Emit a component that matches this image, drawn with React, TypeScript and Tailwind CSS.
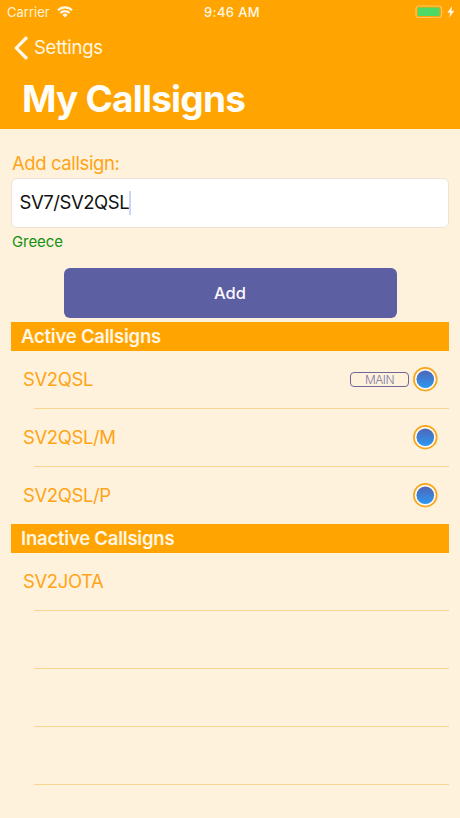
import { useState } from 'react'

interface Callsign {
  name: string
  main?: boolean
}

const ACTIVE: Callsign[] = [{ name: 'SV2QSL', main: true }, { name: 'SV2QSL/M' }, { name: 'SV2QSL/P' }]
const INACTIVE: Callsign[] = [{ name: 'SV2JOTA' }]

// ── Status bar ───────────────────────────────────────────
function StatusBar() {
  return (
    <div className="flex h-6 items-center justify-between pl-[7px] pr-[5px]">
      <div className="flex flex-1 items-center gap-[7px]">
        <span className="text-[13px] leading-6 text-[#fff3d9]">Carrier</span>
        <svg width="16" height="12" viewBox="0 0 16 12" fill="none" stroke="#fff8e8" strokeWidth="2.1">
          <path d="M1 4.2a10 10 0 0 1 14 0" />
          <path d="M3.4 7a6.5 6.5 0 0 1 9.2 0" />
          <path d="M8 11.4 5.4 8.9a3.7 3.7 0 0 1 5.2 0z" fill="#fff8e8" stroke="none" />
        </svg>
      </div>
      <span className="pl-[2px] text-[13px] font-medium leading-6 tracking-[0.35px] text-[#fff8e8]">9:46 AM</span>
      <div className="flex flex-1 items-center justify-end">
        <svg width="40" height="14" viewBox="0 0 40 14">
          <rect x="1" y="1" width="25.5" height="11.5" rx="2.5" fill="none" stroke="#ffc55c" strokeWidth="1.2" />
          <rect x="2.7" y="2.6" width="22" height="8.4" rx="1" fill="#4cd964" />
          <path d="M28 5c1 .4 1 3.2 0 3.6z" fill="#ffc55c" />
          <path d="M37 1 32.4 7.8h2.9L34 12.8 39.4 5.7h-3.1z" fill="#fff8e8" />
        </svg>
      </div>
    </div>
  )
}

function SectionHeader({ title }: { title: string }) {
  return (
    <h2 className="h-[29px] bg-[#ffa400] pl-[10px] text-[18.5px] font-semibold leading-[29px] tracking-[-0.22px] text-[#fff6e3]">
      {title}
    </h2>
  )
}

function Row({ item, last, active }: { item?: Callsign; last?: boolean; active?: boolean }) {
  return (
    <li className={`flex flex-col ${last ? 'h-[57px]' : 'h-[58px]'}`}>
      <div className="flex flex-1 items-center pl-3 pr-[11px]">
        <span className="flex-1 text-[18.5px] tracking-[-0.4px] text-[#ffa416]">{item?.name}</span>
        {item?.main && (
          <span className="mr-1 flex h-[15px] w-[59px] items-center justify-center rounded-[4px] border border-[#71659a] text-[12px] font-light leading-none tracking-[-0.5px] text-[#7f7aa5]">
            MAIN
          </span>
        )}
        {active && (
          <svg width="25" height="25" viewBox="0 0 25 25">
            <defs>
              <linearGradient id="dot" x1="0" y1="0" x2="0" y2="1">
                <stop offset="0" stopColor="#5065b5" />
                <stop offset="1" stopColor="#2c98f3" />
              </linearGradient>
            </defs>
            <circle cx="12.3" cy="12.2" r="11.4" fill="#fffaf0" stroke="#f9a61c" strokeWidth="1.7" />
            <circle cx="12.3" cy="12.2" r="8.8" fill="url(#dot)" />
          </svg>
        )}
      </div>
      {!last && <div className="ml-[23px] h-px bg-[#fad591]" />}
    </li>
  )
}

export default function App() {
  const [value] = useState('SV7/SV2QSL')

  return (
    <div className="h-[818px] w-[460px] overflow-hidden bg-[#fef2dc] font-['Inter','Liberation_Sans',sans-serif]">
      <header className="h-[129px] bg-[#ffa400]">
        <StatusBar />
        <button className="flex h-[47px] items-center gap-[6px] pl-[14px] text-[18.5px] tracking-[-0.25px] text-[#fff6e3]">
          <svg width="14" height="24" viewBox="0 0 14 24" fill="none" stroke="#fffaf0" strokeWidth="3.2">
            <path d="M13 1.2 2.4 12 13 22.8" />
          </svg>
          Settings
        </button>
        <h1 className="pl-[22px] text-[37px] font-bold leading-[56px] tracking-[-0.8px] text-[#fffdf8]">My Callsigns</h1>
      </header>

      <main className="pl-[11px] pr-[11px] pt-5">
        <p className="h-[29px] pl-[1px] text-[18.5px] leading-7 tracking-[-0.4px] text-[#ffa416]">Add callsign:</p>
        <div className="flex h-[50px] items-center rounded-[6px] border border-[#ece4d6] bg-white pl-[7.5px] text-[18.5px] tracking-[-0.45px] text-[#111]">
          {value}
          <span className="h-6 w-[1.5px] bg-[#cfd2f3]" />
        </div>
        <p className="h-[40px] pl-[1px] text-[15px] leading-[27px] tracking-[-0.1px] text-[#129012]">Greece</p>
        <button className="mx-auto flex h-[50px] w-[333px] items-center justify-center rounded-[6px] bg-[#5c5fa2] text-[16.5px] font-medium text-[#fbfaff]">
          Add
        </button>

        <section className="mt-1">
          <SectionHeader title="Active Callsigns" />
          <ul>
            {ACTIVE.map((c, i) => (
              <Row key={c.name} item={c} active last={i === ACTIVE.length - 1} />
            ))}
          </ul>
        </section>
        <section>
          <SectionHeader title="Inactive Callsigns" />
          <ul>
            {INACTIVE.map(c => (
              <Row key={c.name} item={c} />
            ))}
            {[0, 1, 2].map(i => (
              <Row key={i} />
            ))}
          </ul>
        </section>
      </main>
    </div>
  )
}
